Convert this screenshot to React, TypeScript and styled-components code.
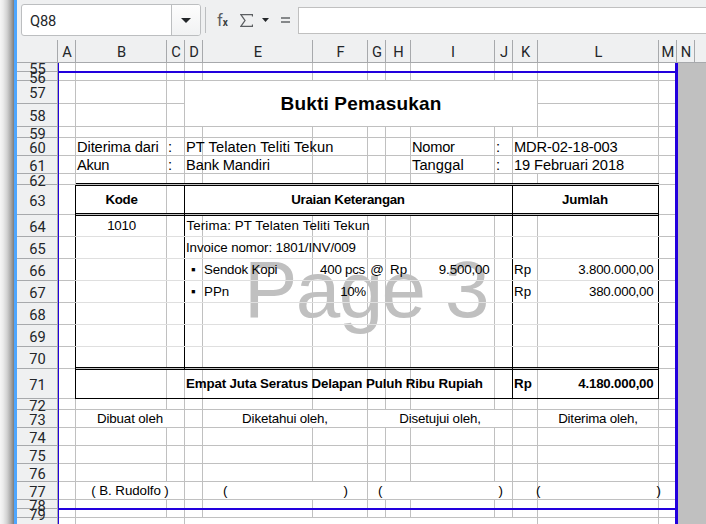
import React from 'react';
import styled, { createGlobalStyle, css } from 'styled-components';

const GRID = '#c0c0c0';
const FAINT = '#dfdfdf';
const HEADER_LINE = '#a7a9ac';
const CHROME = '#eff0f1';
const BREAK = '#2200dd';

const Global = createGlobalStyle`
  *, *::before, *::after { box-sizing: border-box; }
  body { margin: 0; overflow: hidden; }
`;

const Screen = styled.div`
  display: flex;
  width: 706px;
  height: 524px;
  overflow: hidden;
  background: ${CHROME};
  font-family: Roboto, sans-serif;
  color: #232629;
`;

const WindowEdge = styled.div`
  flex: 0 0 17px;
  border-right: 3px solid #4da6ff;
  background: linear-gradient(to right, #f6f6f6 0, #ececec 3px, #d2d2d2 7px, #a6a6a6 11px, #7c7c7c 14px);
`;

const Window = styled.div`
  flex: 1;
  min-width: 0;
  display: flex;
  flex-direction: column;
`;

const FormulaBar = styled.div`
  flex: 0 0 40px;
  display: flex;
  align-items: center;
  padding-left: 4px;
`;

const NameBox = styled.div`
  display: flex;
  width: 180px;
  height: 32px;
  border: 1px solid #bcbec0;
  border-radius: 3px;
  background: #fff;
  overflow: hidden;
`;

const NameText = styled.div`
  flex: 1;
  padding: 1px 0 0 8px;
  font-size: 14.67px;
  line-height: 31px;
  letter-spacing: -0.2px;
`;

const NameToggle = styled.div`
  width: 29px;
  display: flex;
  align-items: center;
  justify-content: center;
  border-left: 1px solid #bcbec0;
  background: linear-gradient(#fdfdfd, #f1f2f3);
`;

const Separator = styled.div`
  width: 1px;
  height: 26px;
  margin: 0 11px 0 4px;
  background: #bcbec0;
`;

const FunctionIcon = styled.div`
  display: flex;
  align-items: baseline;
  width: 23px;
  padding-top: 1px;
  font-size: 16.5px;
  line-height: 20px;
  color: #5b5e61;
`;

const FunctionSub = styled.span`
  font-size: 10px;
  font-weight: 700;
  line-height: 1;
  color: #3a3d40;
`;

const IconSlot = styled.div<{ $gap: number }>`
  display: flex;
  margin-right: ${p => p.$gap}px;
`;

const FormulaInput = styled.div`
  flex: 1;
  height: 27px;
  margin-top: 1px;
  border: 1px solid ${GRID};
  border-right: 0;
  background: #fff;
`;

const ColumnHeads = styled.div`
  flex: 0 0 23px;
  height: 23px;
  min-height: 0;
  display: flex;
  border-bottom: 1px solid ${HEADER_LINE};
`;

const ColumnHead = styled.div<{ $w: number }>`
  flex: 0 0 ${p => p.$w}px;
  height: 22px;
  padding: 1px 0 0 1px;
  border-right: 1px solid ${HEADER_LINE};
  font-size: 14.67px;
  line-height: 22px;
  text-align: center;
  white-space: nowrap;
`;

const Body = styled.div`
  flex: 1;
  display: flex;
  min-height: 0;
  overflow: hidden;
  background: ${GRID};
`;

const WIDTHS: [string, number][] = [
  ['A', 18], ['B', 91], ['C', 18], ['D', 18], ['E', 110], ['F', 55], ['G', 18],
  ['H', 25], ['I', 84], ['J', 18], ['K', 25], ['L', 121], ['M', 18],
];

const Sheet = styled.div`
  position: relative;
  display: grid;
  flex: none;
  width: 661px;
  height: 477px;
  grid-template-columns: 41px ${WIDTHS.map(([, w]) => `${w}px`).join(' ')};
  background: #fff;
  isolation: isolate;
`;

const RowHead = styled.div<{ $short: boolean }>`
  display: flex;
  align-items: center;
  justify-content: center;
  padding-top: ${p => (p.$short ? 3 : 1)}px;
  background: ${CHROME};
  box-shadow: inset -1px 0 ${HEADER_LINE}, inset 0 -1px ${HEADER_LINE};
  font-size: 14.67px;
  line-height: 0;
`;

const RowNumber = styled.span`
  position: relative;
  z-index: 1;
`;

const Cell = styled.div<{ $cols: number; $rows: number; $lines: string }>`
  grid-column: span ${p => p.$cols};
  grid-row: span ${p => p.$rows};
  display: flex;
  align-items: center;
  min-width: 0;
  min-height: 0;
  padding-bottom: 1px;
  box-shadow: ${p => p.$lines};
`;

type TextProps = {
  $align?: 'left' | 'center' | 'right';
  $pad?: number;
  $size?: number;
  $bold?: boolean;
  $track?: number;
};

const Text = styled.span<TextProps>`
  position: relative;
  z-index: 2;
  flex: 1;
  min-width: 0;
  font-family: 'Liberation Sans', Arial, sans-serif;
  font-size: ${p => p.$size ?? 13.33}px;
  font-weight: ${p => (p.$bold ? 700 : 400)};
  line-height: 17px;
  letter-spacing: ${p => p.$track ?? 0}px;
  white-space: nowrap;
  color: #000;
  text-align: ${p => p.$align ?? 'left'};
  ${p => p.$align === 'right'
    ? css`padding-right: ${p.$pad ?? 5.5}px;`
    : p.$align === 'center'
      ? css`padding-right: ${p.$pad ?? 1}px;`
      : css`padding-left: ${p.$pad ?? 1}px;`}
`;

const FieldText = styled(Text)`
  padding-top: 2px;
`;

const Signature = styled(Text)<{ $side: number }>`
  display: flex;
  justify-content: space-between;
  padding: 0;
  margin: 0 ${p => p.$side}px;
`;

const Watermark = styled.div`
  position: absolute;
  z-index: -1;
  left: 227px;
  top: 187px;
  font: 80px/80px 'Liberation Sans', Arial, sans-serif;
  letter-spacing: -1.6px;
  white-space: nowrap;
  color: ${GRID};
`;

const PageBreak = styled.div<{ $top: number }>`
  position: absolute;
  z-index: 3;
  left: 41px;
  right: 0;
  top: ${p => p.$top}px;
  height: 2px;
  background: ${BREAK};
`;

const PageSides = styled.div`
  position: absolute;
  z-index: 3;
  top: 0;
  bottom: 0;
  left: 41px;
  right: 0;
  border-left: 1px solid ${BREAK};
  border-right: 3px solid ${BREAK};
`;

type Row = {
  n: number;
  h: number;
  merge?: Record<string, number>;
  text?: Record<string, React.ReactNode>;
};

const big = (t: string, track = 0, pad = 1) => (
  <FieldText $size={14.67} $track={track} $pad={pad}>{t}</FieldText>
);
const head = (t: string, track: number, pad = 2) => (
  <Text $bold $align="center" $track={track} $pad={pad}>{t}</Text>
);
const signMerge = { B: 2, E: 2, G: 4 };

const ROWS: Row[] = [
  { n: 55, h: 9 },
  { n: 56, h: 9 },
  {
    n: 57, h: 23, merge: { D: 8 },
    text: { D: <Text $bold $size={19} $align="center" $pad={1} $track={0.17}>Bukti Pemasukan</Text> },
  },
  { n: 58, h: 23 },
  { n: 59, h: 11 },
  {
    n: 60, h: 18, merge: { K: 2 },
    text: {
      B: big('Diterima dari', -0.1), C: big(':'), D: big('PT Telaten Teliti Tekun', 0.08),
      I: big('Nomor', -0.25), J: big(':'), K: big('MDR-02-18-003', -0.12),
    },
  },
  {
    n: 61, h: 18, merge: { K: 2 },
    text: {
      B: big('Akun', -0.3), C: big(':'), D: big('Bank Mandiri', -0.15),
      I: big('Tanggal', 0.07), J: big(':'), K: big('19 Februari 2018', -0.1),
    },
  },
  { n: 62, h: 11 },
  {
    n: 63, h: 30, merge: { D: 7, K: 2 },
    text: { B: head('Kode', -0.3, 0), D: head('Uraian Keterangan', -0.3), K: head('Jumlah', -0.15) },
  },
  {
    n: 64, h: 22,
    text: {
      B: <Text $align="center" $pad={0} $track={-0.25}>1010</Text>,
      D: <Text $track={0.11} $pad={1.5}>Terima: PT Telaten Teliti Tekun</Text>,
    },
  },
  { n: 65, h: 22, text: { D: <Text $track={-0.1}>Invoice nomor: 1801/INV/009</Text> } },
  {
    n: 66, h: 22,
    text: {
      D: <Text $pad={6}>▪</Text>,
      E: <Text $track={-0.2}>Sendok Kopi</Text>,
      F: <Text $align="right" $pad={3} $track={-0.25}>400 pcs</Text>,
      G: <Text $align="center" $pad={0}>@</Text>,
      H: <Text $pad={4}>Rp</Text>,
      I: <Text $align="right" $track={-0.15}>9.500,00</Text>,
      K: <Text>Rp</Text>,
      L: <Text $align="right" $track={-0.22}>3.800.000,00</Text>,
    },
  },
  {
    n: 67, h: 22,
    text: {
      D: <Text $pad={6}>▪</Text>,
      E: <Text>PPn</Text>,
      F: <Text $align="right" $pad={2.5} $track={-0.5}>10%</Text>,
      K: <Text>Rp</Text>,
      L: <Text $align="right" $track={-0.22}>380.000,00</Text>,
    },
  },
  { n: 68, h: 22 },
  { n: 69, h: 22 },
  { n: 70, h: 22 },
  {
    n: 71, h: 30,
    text: {
      D: <Text $bold $track={-0.14}>Empat Juta Seratus Delapan Puluh Ribu Rupiah</Text>,
      K: <Text $bold>Rp</Text>,
      L: <Text $bold $align="right" $track={-0.22}>4.180.000,00</Text>,
    },
  },
  { n: 72, h: 11 },
  {
    n: 73, h: 18, merge: signMerge,
    text: {
      B: <Text $align="center" $track={-0.12}>Dibuat oleh</Text>,
      E: <Text $align="center" $track={-0.16}>Diketahui oleh,</Text>,
      G: <Text $align="center" $track={-0.14}>Disetujui oleh,</Text>,
      L: <Text $align="center" $track={-0.18}>Diterima oleh,</Text>,
    },
  },
  { n: 74, h: 18 },
  { n: 75, h: 18 },
  { n: 76, h: 18 },
  {
    n: 77, h: 18, merge: signMerge,
    text: {
      B: <Text $align="center" $track={-0.08}>( B. Rudolfo )</Text>,
      E: <Signature $side={20}><span>(</span><span>)</span></Signature>,
      G: <Signature $side={10}><span>(</span><span>)</span></Signature>,
      L: <Signature $side={-2}><span>(</span><span>)</span></Signature>,
    },
  },
  { n: 78, h: 9 },
  { n: 79, h: 9 },
  { n: 80, h: 23, merge: { B: 2, D: 8 } },
];

/* Lines are stacked front to back: black rules, the row line, then the column line. */
function cellLines(n: number, first: number, last: number) {
  const inFrame = first >= 1 && last <= 11;
  const out: string[] = [];
  const frameRow = n >= 63 && n <= 71;
  const rightBlack = frameRow && (last === 0 || last === 9 || last === 11 || (last === 2 && n < 71));
  const right = `inset -1px 0 ${rightBlack ? '#000' : GRID}`;
  const doubleBottom = n === 62 || n === 63 || n === 70;
  const doubleTop = n === 63 || n === 64 || n === 71;
  if (inFrame && doubleTop) out.push('inset 0 1px #000');
  if (inFrame && n === 71) out.push('inset 0 -1px #000');
  if (rightBlack && (doubleBottom || n === 71)) out.push(right);
  out.push(`inset 0 -1px ${inFrame && n >= 64 && n <= 69 ? FAINT : GRID}`);
  if (inFrame && doubleBottom) out.push('inset 0 -2px #000');
  out.push(right);
  return out.join(', ');
}

function SheetRow({ row }: { row: Row }) {
  const cells: React.ReactNode[] = [];
  let i = 0;
  while (i < WIDTHS.length) {
    const name = WIDTHS[i][0];
    if (row.n === 58 && name === 'D') {
      i += 8;
      continue;
    }
    const span = row.merge?.[name] ?? 1;
    cells.push(
      <Cell
        key={name}
        $cols={span}
        $rows={row.n === 57 && name === 'D' ? 2 : 1}
        $lines={cellLines(row.n, i, i + span - 1)}
      >
        {row.text?.[name]}
      </Cell>,
    );
    i += span;
  }
  return (
    <>
      <RowHead $short={row.h < 12}><RowNumber>{row.n < 80 ? row.n : ''}</RowNumber></RowHead>
      {cells}
    </>
  );
}

const SheetGrid = styled(Sheet)`
  grid-template-rows: ${ROWS.map(r => `${r.h}px`).join(' ')};
`;

export default function App() {
  return (
    <Screen>
      <Global />
      <WindowEdge />
      <Window>
        <FormulaBar>
          <NameBox>
            <NameText>Q88</NameText>
            <NameToggle>
              <svg width="10" height="5" viewBox="0 0 10 5"><path d="M0 0h10L5 5z" fill="#232629" /></svg>
            </NameToggle>
          </NameBox>
          <Separator />
          <FunctionIcon>f<FunctionSub>x</FunctionSub></FunctionIcon>
          <IconSlot $gap={9}>
            <svg width="13" height="13" viewBox="0 0 13 13" fill="none" stroke="#5b5e61" strokeWidth="1.3">
              <path d="M12.5 2.5v-2H.8L5 6.5.8 12.5h11.7v-2" />
            </svg>
          </IconSlot>
          <IconSlot $gap={12}>
            <svg width="7" height="4" viewBox="0 0 7 4"><path d="M0 0h7L3.5 4z" fill="#232629" /></svg>
          </IconSlot>
          <IconSlot $gap={8}>
            <svg width="9" height="6" viewBox="0 0 9 6"><path d="M0 1h9M0 5h9" stroke="#85888a" strokeWidth="2" /></svg>
          </IconSlot>
          <FormulaInput />
        </FormulaBar>
        <ColumnHeads>
          <ColumnHead $w={41} />
          {WIDTHS.map(([name, w]) => <ColumnHead key={name} $w={w}>{name}</ColumnHead>)}
          <ColumnHead $w={18}>N</ColumnHead>
        </ColumnHeads>
        <Body>
          <SheetGrid>
            {ROWS.map(row => <SheetRow key={row.n} row={row} />)}
            <Watermark>Page 3</Watermark>
            <PageBreak $top={8} />
            <PageBreak $top={445} />
            <PageSides />
          </SheetGrid>
        </Body>
      </Window>
    </Screen>
  );
}
